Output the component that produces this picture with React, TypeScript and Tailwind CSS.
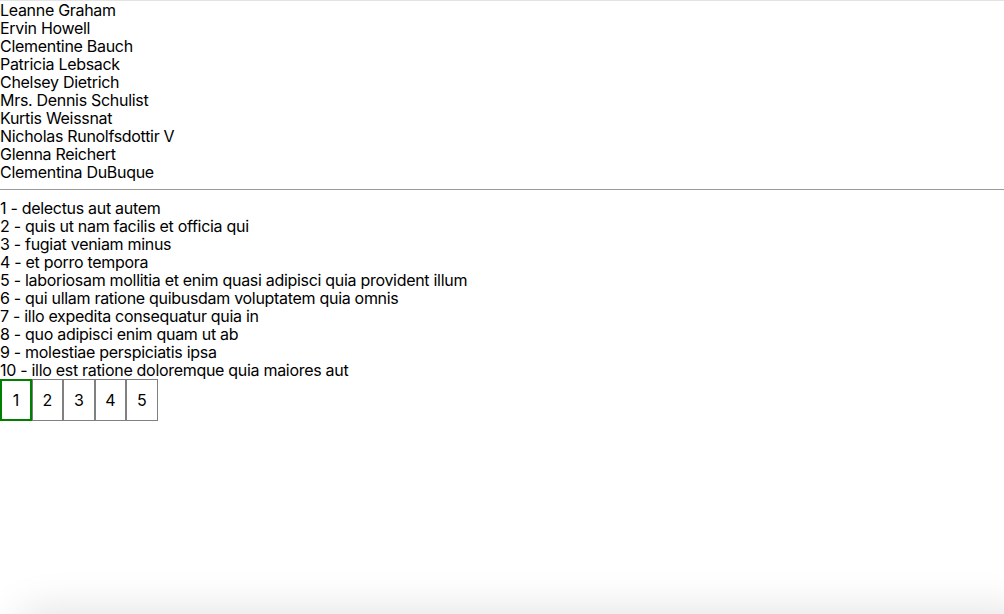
import { useState } from "react";

const users = [
    "Leanne Graham",
    "Ervin Howell",
    "Clementine Bauch",
    "Patricia Lebsack",
    "Chelsey Dietrich",
    "Mrs. Dennis Schulist",
    "Kurtis Weissnat",
    "Nicholas Runolfsdottir V",
    "Glenna Reichert",
    "Clementina DuBuque",
];

const todos = [
    "delectus aut autem",
    "quis ut nam facilis et officia qui",
    "fugiat veniam minus",
    "et porro tempora",
    "laboriosam mollitia et enim quasi adipisci quia provident illum",
    "qui ullam ratione quibusdam voluptatem quia omnis",
    "illo expedita consequatur quia in",
    "quo adipisci enim quam ut ab",
    "molestiae perspiciatis ipsa",
    "illo est ratione doloremque quia maiores aut",
];

export default function App() {
    const [page, setPage] = useState(1);

    return (
        <div className="min-h-screen bg-white text-black border-t border-[#e3e3e3] font-['Inter',sans-serif] text-[16px] leading-[18px] tracking-[-0.3px] overflow-hidden">
            <ul>
                {users.map((name) => (
                    <li key={name}>{name}</li>
                ))}
            </ul>

            <hr className="mt-2 mb-[9px] border-t border-[#9a9a9a]" />

            <ul>
                {todos.map((title, i) => (
                    <li key={i}>
                        {i + 1} - {title}
                    </li>
                ))}
            </ul>

            <div className="flex">
                {[1, 2, 3, 4, 5].map((n) => (
                    <button
                        key={n}
                        onClick={() => setPage(n)}
                        className={
                            n === page
                                ? "w-[31.5px] h-[42px] border-2 border-[#008000] text-[16px]"
                                : "w-[31.5px] h-[42px] border border-[#808080] text-[16px]"
                        }
                    >
                        {n}
                    </button>
                ))}
            </div>

            <div className="fixed left-[18px] right-[-30px] top-full h-10 rounded-2xl shadow-[0_0_45px_rgba(0,0,0,0.14)]" />
        </div>
    );
}
